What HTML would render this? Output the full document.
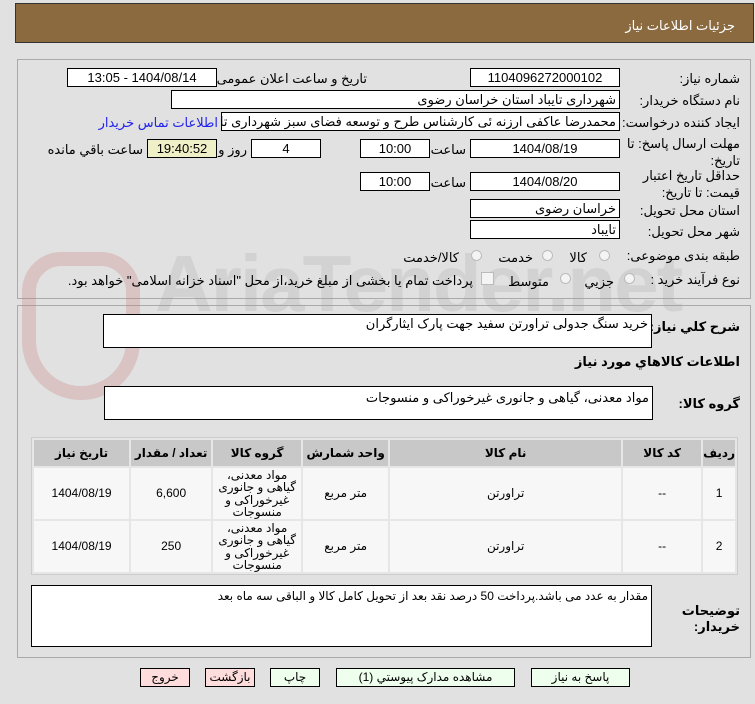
<!DOCTYPE html>
<html><head><meta charset="utf-8"><style>
body{margin:0;width:755px;height:704px;background:#e1e1e1;position:relative;overflow:hidden;font-family:"Liberation Sans","DejaVu Sans",sans-serif;font-size:12px;color:#000}
.a{position:absolute}
.box{position:absolute;background:#fff;border:1px solid #000;box-sizing:border-box;direction:rtl;padding:0 3px;line-height:17px;white-space:nowrap;overflow:hidden}
.c{text-align:center}
.l{position:absolute;direction:rtl;white-space:nowrap}
.panel{position:absolute;border:1px solid #aaa;box-sizing:border-box}
.rad{position:absolute;width:11px;height:11px;border:1px solid #bbb;border-radius:50%;background:#f4f4f4;box-sizing:border-box}
table{border-collapse:separate;border-spacing:2px;position:absolute;left:31px;top:437px;width:707px;background:#e6e6e6;border:1px solid #ccc}
th{background:#c8c8c8;height:26px;font-weight:bold;font-size:12px;padding:0}
td{background:#f7f7f7;text-align:center;height:51px;font-size:12px;direction:rtl;line-height:12.5px;padding:0}
.btn{position:absolute;top:668px;height:19px;border:1px solid #000;box-sizing:border-box;text-align:center;line-height:17px;direction:rtl;font-size:12px}
</style></head><body>
<div class="a" style="left:15px;top:3px;width:739px;height:40px;background:#8b6a40;border:1px solid #333;box-sizing:border-box"></div>
<div class="l" style="right:20px;top:18px;color:#fff;font-size:13px">جزئیات اطلاعات نیاز</div>

<div class="panel" style="left:17px;top:59px;width:734px;height:240px"></div>
<div class="panel" style="left:17px;top:305px;width:734px;height:353px"></div>

<div class="a" style="left:22px;top:252px;width:118px;height:148px;border:14px solid rgba(200,120,120,0.28);border-radius:40px 40px 60px 60px;box-sizing:border-box"></div>
<div class="a" style="left:155px;top:238px;font-size:80px;font-weight:bold;color:rgba(150,150,150,0.2);letter-spacing:-2px">AriaTender.net</div>

<div class="l" style="right:15px;top:71px;font-size:13px">شماره نیاز:</div>
<div class="box c" style="left:470px;top:68px;width:150px;height:19px;font-size:13px">1104096272000102</div>
<div class="l" style="right:388px;top:71px;font-size:13px">تاریخ و ساعت اعلان عمومی:</div>
<div class="box c" style="left:67px;top:68px;width:150px;height:19px;font-size:13px">1404/08/14 - 13:05</div>

<div class="l" style="right:15px;top:93px;font-size:13px">نام دستگاه خریدار:</div>
<div class="box" style="left:171px;top:90px;width:449px;height:19px;font-size:13px">شهرداری تایباد استان خراسان رضوی</div>

<div class="l" style="right:15px;top:115px;font-size:13px">ایجاد کننده درخواست:</div>
<div class="box" style="left:221px;top:112px;width:399px;height:19px;font-size:13px">محمدرضا عاکفی ارزنه ئی کارشناس طرح و توسعه فضای سبز شهرداری تایباد استان</div>
<div class="l" style="right:537px;top:115px;font-size:13px;color:#22e">اطلاعات تماس خریدار</div>

<div class="l" style="right:15px;top:135px;font-size:13px;text-align:right;line-height:17px">مهلت ارسال پاسخ: تا<br>تاریخ:</div>
<div class="box c" style="left:470px;top:139px;width:150px;height:19px;font-size:13px">1404/08/19</div>
<div class="l" style="right:289px;top:142px;font-size:13px">ساعت</div>
<div class="box c" style="left:360px;top:139px;width:70px;height:19px;font-size:13px">10:00</div>
<div class="box c" style="left:251px;top:139px;width:70px;height:19px;font-size:13px">4</div>
<div class="l" style="right:508px;top:142px;font-size:13px">روز و</div>
<div class="box c" style="left:147px;top:139px;width:70px;height:19px;font-size:13px;background:#f0f0c8">19:40:52</div>
<div class="l" style="right:612px;top:142px;font-size:13px">ساعت باقي مانده</div>

<div class="l" style="right:15px;top:167px;font-size:13px;text-align:right;line-height:17px">حداقل تاریخ اعتبار<br>قیمت: تا تاریخ:</div>
<div class="box c" style="left:470px;top:172px;width:150px;height:19px;font-size:13px">1404/08/20</div>
<div class="l" style="right:289px;top:175px;font-size:13px">ساعت</div>
<div class="box c" style="left:360px;top:172px;width:70px;height:19px;font-size:13px">10:00</div>

<div class="l" style="right:15px;top:203px;font-size:13px">استان محل تحویل:</div>
<div class="box" style="left:470px;top:199px;width:150px;height:19px;font-size:13px">خراسان رضوی</div>
<div class="l" style="right:15px;top:224px;font-size:13px">شهر محل تحویل:</div>
<div class="box" style="left:470px;top:220px;width:150px;height:19px;font-size:13px">تایباد</div>

<div class="l" style="right:15px;top:248px;font-size:13px">طبقه بندی موضوعی:</div>
<div class="rad" style="left:599px;top:250px"></div><div class="l" style="right:168px;top:250px;font-size:13px">کالا</div>
<div class="rad" style="left:542px;top:250px"></div><div class="l" style="right:222px;top:250px;font-size:13px">خدمت</div>
<div class="rad" style="left:471px;top:250px"></div><div class="l" style="right:296px;top:250px;font-size:13px">کالا/خدمت</div>

<div class="l" style="right:15px;top:272px;font-size:13px">نوع فرآیند خرید :</div>
<div class="rad" style="left:624px;top:273px"></div><div class="l" style="right:141px;top:274px;font-size:13px">جزیي</div>
<div class="rad" style="left:560px;top:273px"></div><div class="l" style="right:206px;top:274px;font-size:13px">متوسط</div>
<div class="a" style="left:481px;top:272px;width:11px;height:11px;border:1px solid #bbb;background:#f4f4f4"></div>
<div class="l" style="right:282px;top:273px;font-size:13px">پرداخت تمام یا بخشی از مبلغ خرید،از محل "اسناد خزانه اسلامی" خواهد بود.</div>

<div class="l" style="right:15px;top:319px;font-size:13px;font-weight:bold">شرح کلي نیاز:</div>
<div class="box" style="left:103px;top:314px;width:549px;height:34px;font-size:13px">خرید سنگ جدولی تراورتن سفید جهت پارک ایثارگران</div>
<div class="l" style="right:15px;top:354px;font-size:13px;font-weight:bold">اطلاعات کالاهاي مورد نیاز</div>
<div class="l" style="right:15px;top:396px;font-size:13px;font-weight:bold">گروه کالا:</div>
<div class="box" style="left:104px;top:386px;width:549px;height:34px;font-size:13px;padding-top:2px">مواد معدنی، گیاهی و جانوری غیرخوراکی و منسوجات</div>

<table dir="rtl">
<tr><th style="width:24px">ردیف</th><th style="width:78px">کد کالا</th><th style="width:231px">نام کالا</th><th style="width:85px">واحد شمارش</th><th style="width:88px">گروه کالا</th><th style="width:80px">تعداد / مقدار</th><th>تاریخ نیاز</th></tr>
<tr><td>1</td><td>--</td><td>تراورتن</td><td>متر مربع</td><td>مواد معدنی، گیاهی و جانوری غیرخوراکی و منسوجات</td><td>6,600</td><td>1404/08/19</td></tr>
<tr><td>2</td><td>--</td><td>تراورتن</td><td>متر مربع</td><td>مواد معدنی، گیاهی و جانوری غیرخوراکی و منسوجات</td><td>250</td><td>1404/08/19</td></tr>
</table>

<div class="l" style="right:15px;top:603px;font-size:13px;font-weight:bold;text-align:right">توضیحات<br>خریدار:</div>
<div class="box" style="left:31px;top:585px;width:621px;height:62px;font-size:12px;padding-top:2px">مقدار به عدد می باشد.پرداخت 50 درصد نقد بعد از تحویل کامل کالا و الباقی سه ماه بعد</div>

<div class="btn" style="left:140px;width:50px;background:#fdd">خروج</div>
<div class="btn" style="left:205px;width:50px;background:#fdd">بازگشت</div>
<div class="btn" style="left:270px;width:50px;background:#efe">چاپ</div>
<div class="btn" style="left:336px;width:179px;background:#efe">مشاهده مدارک پیوستي (1)</div>
<div class="btn" style="left:531px;width:99px;background:#efe">پاسخ به نیاز</div>
</body></html>
